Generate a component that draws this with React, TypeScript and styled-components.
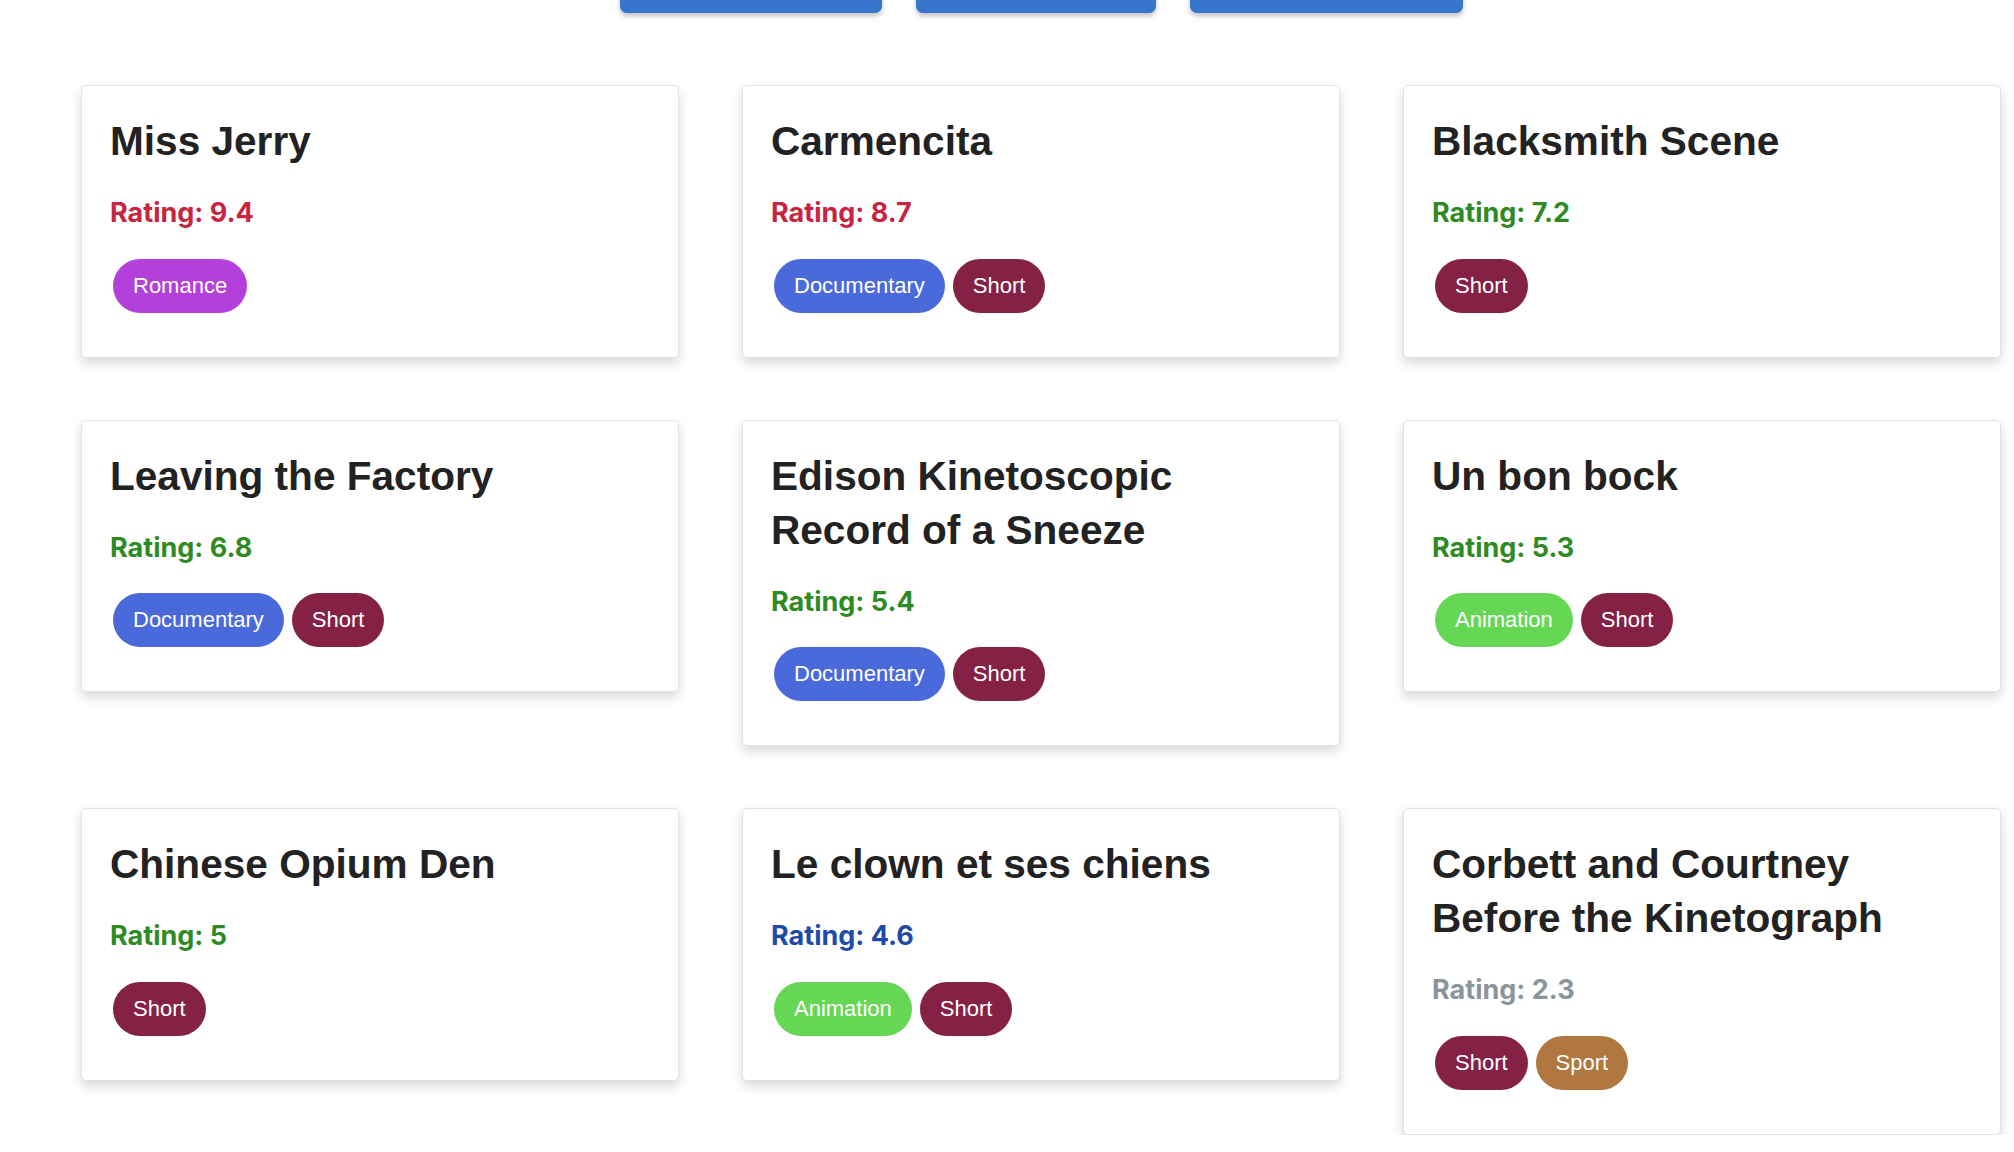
import React from "react";
import styled, { createGlobalStyle } from "styled-components";

const GlobalStyle = createGlobalStyle`
  html, body {
    margin: 0;
    padding: 0;
    background: #ffffff;
    overflow: hidden;
  }
  body {
    font-family: "Liberation Sans", Arial, sans-serif;
  }
`;

const Page = styled.div`
  width: 2082px;
  display: flex;
  flex-direction: column;
  align-items: center;
  margin-top: -47px;
`;

const Toolbar = styled.div`
  display: flex;
  gap: 34px;
  margin-bottom: 72px;
`;

const SortButton = styled.button<{ $w: number }>`
  width: ${(p) => p.$w}px;
  height: 60px;
  border: none;
  border-radius: 7px;
  background: #3776cc;
  box-shadow: 0 3px 5px rgba(0, 0, 0, 0.25);
`;

const Grid = styled.div`
  display: grid;
  grid-template-columns: repeat(3, 598px);
  column-gap: 63px;
  row-gap: 62px;
  align-items: start;
`;

const Card = styled.div`
  box-sizing: border-box;
  background: #ffffff;
  border: 1px solid #e2e2e2;
  border-radius: 5px;
  padding: 28px 28px 44px 28px;
  box-shadow: 0 5px 12px rgba(0, 0, 0, 0.16);
`;

const Title = styled.h2`
  margin: 0;
  font-family: "Liberation Sans", Arial, sans-serif;
  font-weight: 700;
  font-size: 40.6px;
  line-height: 54px;
  color: #222222;
  padding-right: 30px;
`;

const Rating = styled.p<{ $color: string }>`
  margin: 28px 0 29px 0;
  font-family: Inter, "Noto Sans", sans-serif;
  font-weight: 700;
  font-size: 27px;
  line-height: 33.6px;
  color: ${(p) => p.$color};
`;

const Tags = styled.div`
  display: flex;
  gap: 8px;
  margin-left: 3px;
`;

const Tag = styled.span<{ $bg: string }>`
  display: inline-flex;
  align-items: center;
  height: 54px;
  padding: 0 20px;
  border-radius: 27px;
  background: ${(p) => p.$bg};
  color: #ffffff;
  font-family: "Liberation Sans", Arial, sans-serif;
  font-size: 22px;
`;

const genreColors: Record<string, string> = {
  Romance: "#b440dc",
  Documentary: "#4a69db",
  Short: "#842145",
  Animation: "#66d655",
  Sport: "#b07840",
};

const ratingColor = (r: number) => {
  if (r >= 8) return "#c8243f";
  if (r >= 5) return "#2e8a22";
  if (r >= 4) return "#1e4aa8";
  return "#8a949b";
};

const movies = [
  { title: "Miss Jerry", rating: 9.4, genres: ["Romance"] },
  { title: "Carmencita", rating: 8.7, genres: ["Documentary", "Short"] },
  { title: "Blacksmith Scene", rating: 7.2, genres: ["Short"] },
  { title: "Leaving the Factory", rating: 6.8, genres: ["Documentary", "Short"] },
  { title: "Edison Kinetoscopic Record of a Sneeze", rating: 5.4, genres: ["Documentary", "Short"] },
  { title: "Un bon bock", rating: 5.3, genres: ["Animation", "Short"] },
  { title: "Chinese Opium Den", rating: 5, genres: ["Short"] },
  { title: "Le clown et ses chiens", rating: 4.6, genres: ["Animation", "Short"] },
  { title: "Corbett and Courtney Before the Kinetograph", rating: 2.3, genres: ["Short", "Sport"] },
];

const buttons = [
  { label: "Sort by Rating", w: 262 },
  { label: "Sort by Title", w: 240 },
  { label: "Filter by Genre", w: 273 },
];

export default function App() {
  return (
    <>
      <GlobalStyle />
      <Page>
        <Toolbar>
          {buttons.map((b) => (
            <SortButton key={b.label} $w={b.w} aria-label={b.label} />
          ))}
        </Toolbar>
        <Grid>
          {movies.map((m) => (
            <Card key={m.title}>
              <Title>{m.title}</Title>
              <Rating $color={ratingColor(m.rating)}>Rating: {m.rating}</Rating>
              <Tags>
                {m.genres.map((g) => (
                  <Tag key={g} $bg={genreColors[g]}>
                    {g}
                  </Tag>
                ))}
              </Tags>
            </Card>
          ))}
        </Grid>
      </Page>
    </>
  );
}
